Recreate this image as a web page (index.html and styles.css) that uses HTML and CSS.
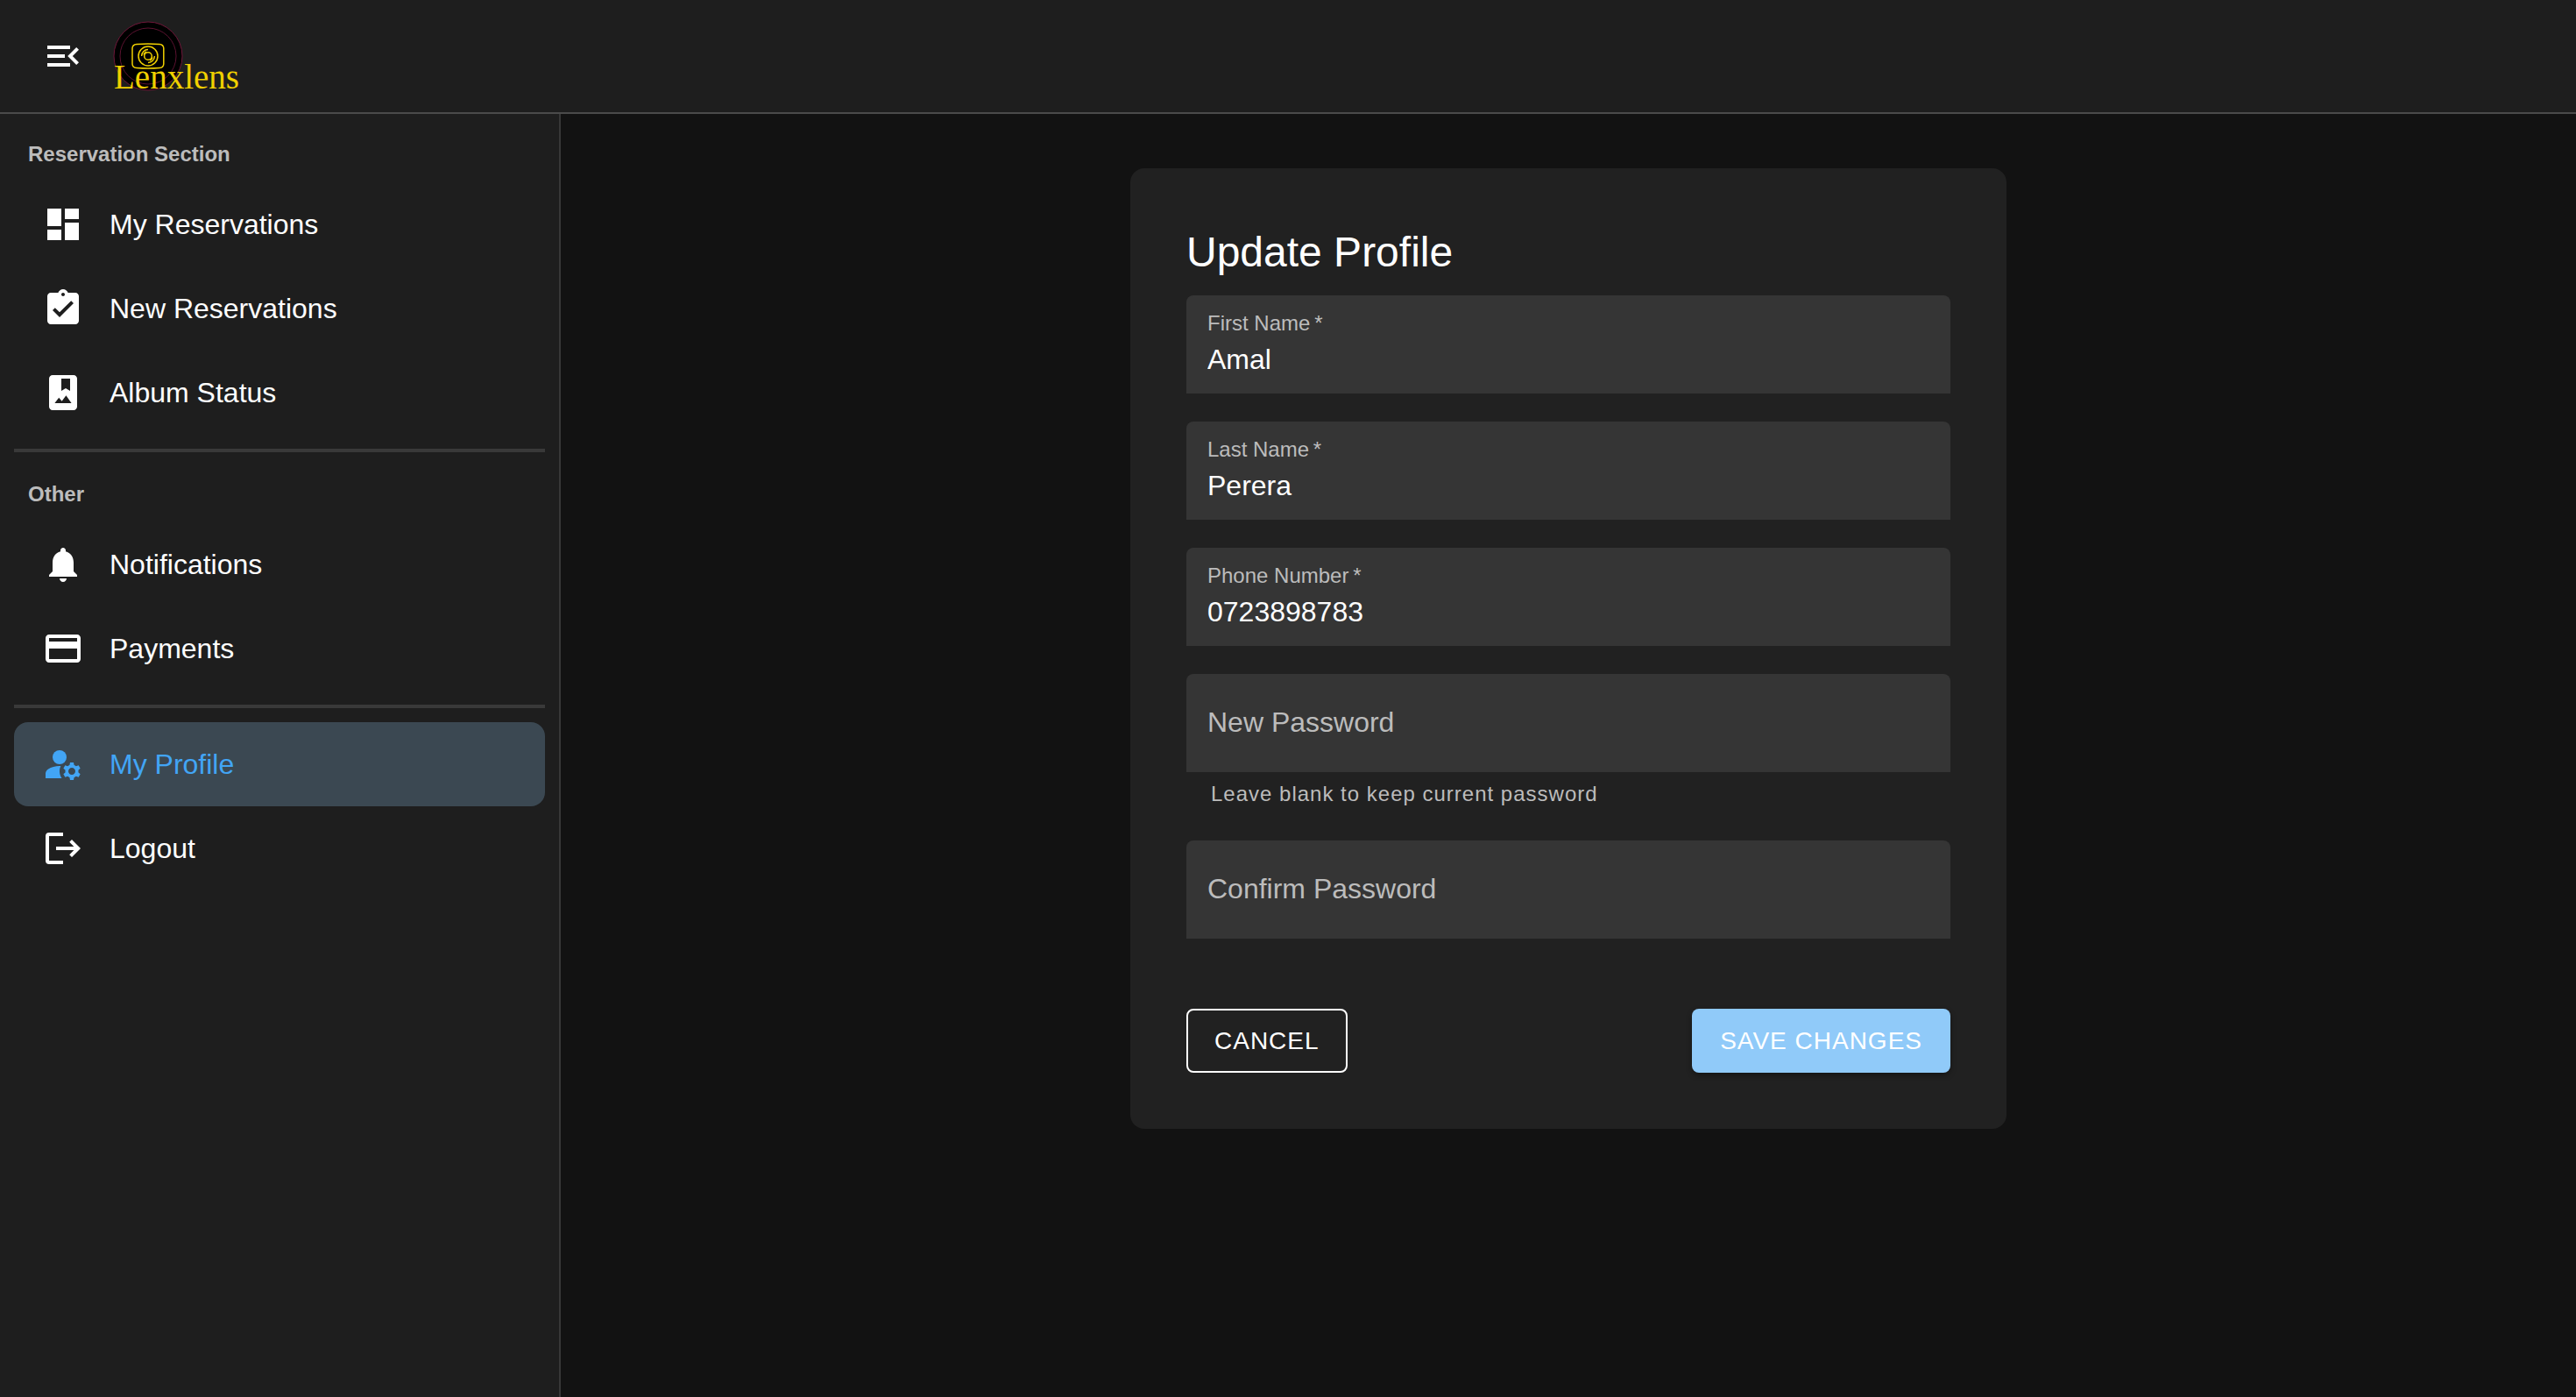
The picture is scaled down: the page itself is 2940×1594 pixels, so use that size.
FILE: index.html
```html
<!DOCTYPE html>
<html lang="en">
<head>
<meta charset="utf-8">
<title>Lenxlens - My Profile</title>
<link rel="stylesheet" href="styles.css">
</head>
<body>
<header class="topbar">
  <button class="menu-button" type="button" aria-label="Collapse menu">
    <svg class="icon" viewBox="0 0 24 24"><path d="M3 18h13v-2H3v2zm0-5h10v-2H3v2zm0-7v2h13V6H3zm18 9.59L17.42 12 21 8.41 19.59 7l-5 5 5 5L21 15.59z"/></svg>
  </button>
  <a class="brand" href="#" aria-label="Lenxlens home">
    <svg class="logo" viewBox="0 0 150 80">
      <circle cx="41" cy="40" r="39" fill="#000" stroke="#6e1638" stroke-width="1"/>
      <circle cx="41" cy="40" r="32" fill="none" stroke="#5c1230" stroke-width="1"/>
      <g fill="none" stroke="#f0d000" stroke-width="1.5">
        <path d="M28 26.4Q41 25.4 54 26.4Q58.6 26.8 58.8 31V49Q58.6 53.2 54 53.6Q41 54.6 28 53.6Q23.2 53.2 23 49V31Q23.2 26.8 28 26.4Z"/>
        <circle cx="41" cy="40" r="11"/>
        <circle cx="41" cy="40" r="4.3"/>
        <path d="M33.600 40A7.400 7.400 0 0 1 41 32.600M36 38.500A5.500 5.500 0 0 1 39 34.900M48.400 40A7.400 7.400 0 0 1 41 47.400M46 41.500A5.500 5.500 0 0 1 43 45.100"/>
      </g>
      <text class="logo-text" x="2" y="77">Lenxlens</text>
    </svg>
  </a>
</header>
<div class="layout">
  <nav class="sidebar" aria-label="Main">
    <h2 class="subheader">Reservation Section</h2>
    <a class="nav-item" href="#">
      <svg class="icon" viewBox="0 0 24 24"><path d="M3 13h8V3H3v10zm0 8h8v-6H3v6zm10 0h8V11h-8v10zm0-18v6h8V3h-8z"/></svg>
      <span>My Reservations</span>
    </a>
    <a class="nav-item" href="#">
      <svg class="icon" viewBox="0 0 24 24"><path d="M19 3h-4.18C14.4 1.84 13.3 1 12 1c-1.3 0-2.4.84-2.82 2H5c-1.1 0-2 .9-2 2v14c0 1.1.9 2 2 2h14c1.1 0 2-.9 2-2V5c0-1.1-.9-2-2-2zm-7 0c.55 0 1 .45 1 1s-.45 1-1 1-1-.45-1-1 .45-1 1-1zm-2 14-4-4 1.41-1.41L10 14.17l6.59-6.59L18 9l-8 8z"/></svg>
      <span>New Reservations</span>
    </a>
    <a class="nav-item" href="#">
      <svg class="icon" viewBox="0 0 24 24"><path fill-rule="evenodd" d="M18 2H6c-1.1 0-2 .9-2 2v16c0 1.1.9 2 2 2h12c1.1 0 2-.9 2-2V4c0-1.1-.9-2-2-2zM11 4h5v7l-2.500-1.500L11 11V4zM7.200 18l2.400-3.100 1.700 2 2.400-3.300L16.800 18z"/></svg>
      <span>Album Status</span>
    </a>
    <hr class="divider">
    <h2 class="subheader">Other</h2>
    <a class="nav-item" href="#">
      <svg class="icon" viewBox="0 0 24 24"><path d="M12 22c1.1 0 2-.9 2-2h-4c0 1.100.89 2 2 2zm6-6v-5c0-3.070-1.640-5.640-4.500-6.320V4c0-.83-.67-1.500-1.500-1.500s-1.500.67-1.500 1.500v.68C7.630 5.360 6 7.920 6 11v5l-2 2v1h16v-1l-2-2z"/></svg>
      <span>Notifications</span>
    </a>
    <a class="nav-item" href="#">
      <svg class="icon" viewBox="0 0 24 24"><path d="M20 4H4c-1.110 0-1.990.89-1.990 2L2 18c0 1.110.89 2 2 2h16c1.110 0 2-.89 2-2V6c0-1.110-.89-2-2-2zm0 14H4v-6h16v6zm0-10H4V6h16v2z"/></svg>
      <span>Payments</span>
    </a>
    <hr class="divider">
    <a class="nav-item nav-item-selected" href="#" aria-current="page">
      <svg class="icon" viewBox="0 0 24 24"><circle cx="10" cy="8" r="4"/><path d="M10.670 13.020C10.450 13.010 10.230 13 10 13c-2.420 0-4.680.67-6.610 1.820-.88.52-1.390 1.500-1.390 2.530V20h9.260c-.79-1.130-1.260-2.510-1.260-4 0-1.070.25-2.070.67-2.980zM20.750 16c0-.22-.03-.42-.06-.63l1.140-1.010-1-1.730-1.450.49c-.32-.27-.68-.48-1.080-.63L18 11h-2l-.3 1.490c-.4.15-.76.36-1.080.63l-1.450-.49-1 1.730 1.140 1.010c-.03.21-.06.41-.06.63s.03.42.06.63l-1.140 1.010 1 1.730 1.450-.49c.32.27.68.48 1.080.63L16 21h2l.3-1.490c.4-.15.76-.36 1.080-.63l1.450.49 1-1.730-1.140-1.010c.03-.21.06-.41.06-.63zM17 18c-1.100 0-2-.9-2-2s.9-2 2-2 2 .9 2 2-.9 2-2 2z"/></svg>
      <span>My Profile</span>
    </a>
    <a class="nav-item" href="#">
      <svg class="icon" viewBox="0 0 24 24"><path d="M12 3H4a2 2 0 0 0-2 2v14a2 2 0 0 0 2 2h8v-2H4V5h8zM17 7l5 5-5 5-1.400-1.430L18.170 13H8v-2h10.170L15.600 8.430z"/></svg>
      <span>Logout</span>
    </a>
  </nav>
  <main class="content">
    <form class="card">
      <h1 class="title">Update Profile</h1>
      <div class="fields">
        <div class="field">
          <label class="label" for="first-name">First Name&#8201;*</label>
          <input class="input" id="first-name" type="text" value="Amal">
        </div>
        <div class="field">
          <label class="label" for="last-name">Last Name&#8201;*</label>
          <input class="input" id="last-name" type="text" value="Perera">
        </div>
        <div class="field">
          <label class="label" for="phone">Phone Number&#8201;*</label>
          <input class="input" id="phone" type="tel" value="0723898783">
        </div>
        <div class="field-group">
          <div class="field">
            <label class="label label-resting" for="new-password">New Password</label>
            <input class="input" id="new-password" type="password" aria-describedby="password-help">
          </div>
          <p class="helper" id="password-help">Leave blank to keep current password</p>
        </div>
        <div class="field">
          <label class="label label-resting" for="confirm-password">Confirm Password</label>
          <input class="input" id="confirm-password" type="password">
        </div>
      </div>
      <div class="actions">
        <button class="button button-outlined" type="button">CANCEL</button>
        <button class="button button-filled" type="submit">SAVE CHANGES</button>
      </div>
    </form>
  </main>
</div>
</body>
</html>
```
FILE: styles.css
```css
* { box-sizing: border-box; }

body {
  margin: 0;
  min-height: 100vh;
  display: flex;
  flex-direction: column;
  background: #121212;
  color: #fff;
  font-family: "Liberation Sans", Arial, sans-serif;
  font-size: 32px;
  line-height: 48px;
}

.icon {
  display: block;
  flex: none;
  width: 48px;
  height: 48px;
  fill: currentColor;
}

/* Top bar */
.topbar {
  position: relative;
  display: flex;
  align-items: center;
  gap: 16px;
  height: 128px;
  padding: 0 32px;
  background: #1e1e1e;
  box-shadow: 0 2px 0 #4b4b4b;
}

.menu-button {
  padding: 16px;
  border: 0;
  background: none;
  color: #fff;
}

.logo {
  display: block;
  width: 150px;
  height: 80px;
  overflow: visible;
}

.logo-text {
  fill: #f0d000;
  font-family: "Liberation Serif", serif;
  font-size: 39px;
}

/* Sidebar */
.layout {
  flex: 1;
  display: flex;
}

.sidebar {
  flex: none;
  width: 640px;
  padding: 0 16px;
  background: #1e1e1e;
  border-right: 2px solid #383838;
}

.subheader {
  margin: 0;
  padding: 36px 16px 20px;
  color: #bcbcbc;
  font-size: 24px;
  line-height: 24px;
  font-weight: 700;
}

.nav-item {
  display: flex;
  align-items: center;
  gap: 29px;
  height: 96px;
  padding: 0 32px;
  border-radius: 16px;
  color: #fff;
  text-decoration: none;
}

.nav-item-selected {
  background: #3b4852;
  color: #42a5f5;
}

.divider {
  height: 4px;
  margin: 16px 0;
  border: 0;
  background: #393939;
}

.divider + .subheader { margin-top: -16px; }

/* Profile form */
.content {
  flex: 1;
  padding: 64px 48px;
}

.card {
  max-width: 1000px;
  margin: 0 auto;
  padding: 64px;
  border-radius: 16px;
  background: #212121;
}

.title {
  margin: 0 0 17px;
  font-size: 48px;
  line-height: 64px;
  font-weight: 400;
}

.fields {
  display: flex;
  flex-direction: column;
  gap: 32px;
}

.field { position: relative; }

/* Floats over the input box */
.label {
  position: absolute;
  top: 20px;
  left: 24px;
  color: #bcbcbc;
  font-size: 24px;
  line-height: 24px;
  pointer-events: none;
}

.label-resting {
  top: 31px;
  font-size: 32px;
  line-height: 48px;
}

.input {
  display: block;
  width: 100%;
  height: 112px;
  padding: 50px 24px 16px;
  border: 0;
  border-radius: 8px 8px 0 0;
  background: #353535;
  color: #fff;
  font: inherit;
}

.helper {
  margin: 5px 28px 1px;
  color: #bcbcbc;
  font-size: 24px;
  line-height: 40px;
  letter-spacing: 1px;
}

.actions {
  display: flex;
  justify-content: space-between;
  margin-top: 80px;
}

.button {
  padding: 12px 32px;
  border: 0;
  border-radius: 8px;
  font: inherit;
  font-size: 28px;
  line-height: 49px;
  letter-spacing: 1px;
  color: #fff;
}

.button-outlined {
  padding: 10px 30px;
  border: 2px solid #fff;
  background: none;
}

.button-filled {
  background: #90caf9;
  box-shadow: 0 3px 6px rgba(0, 0, 0, 0.35);
}
```
